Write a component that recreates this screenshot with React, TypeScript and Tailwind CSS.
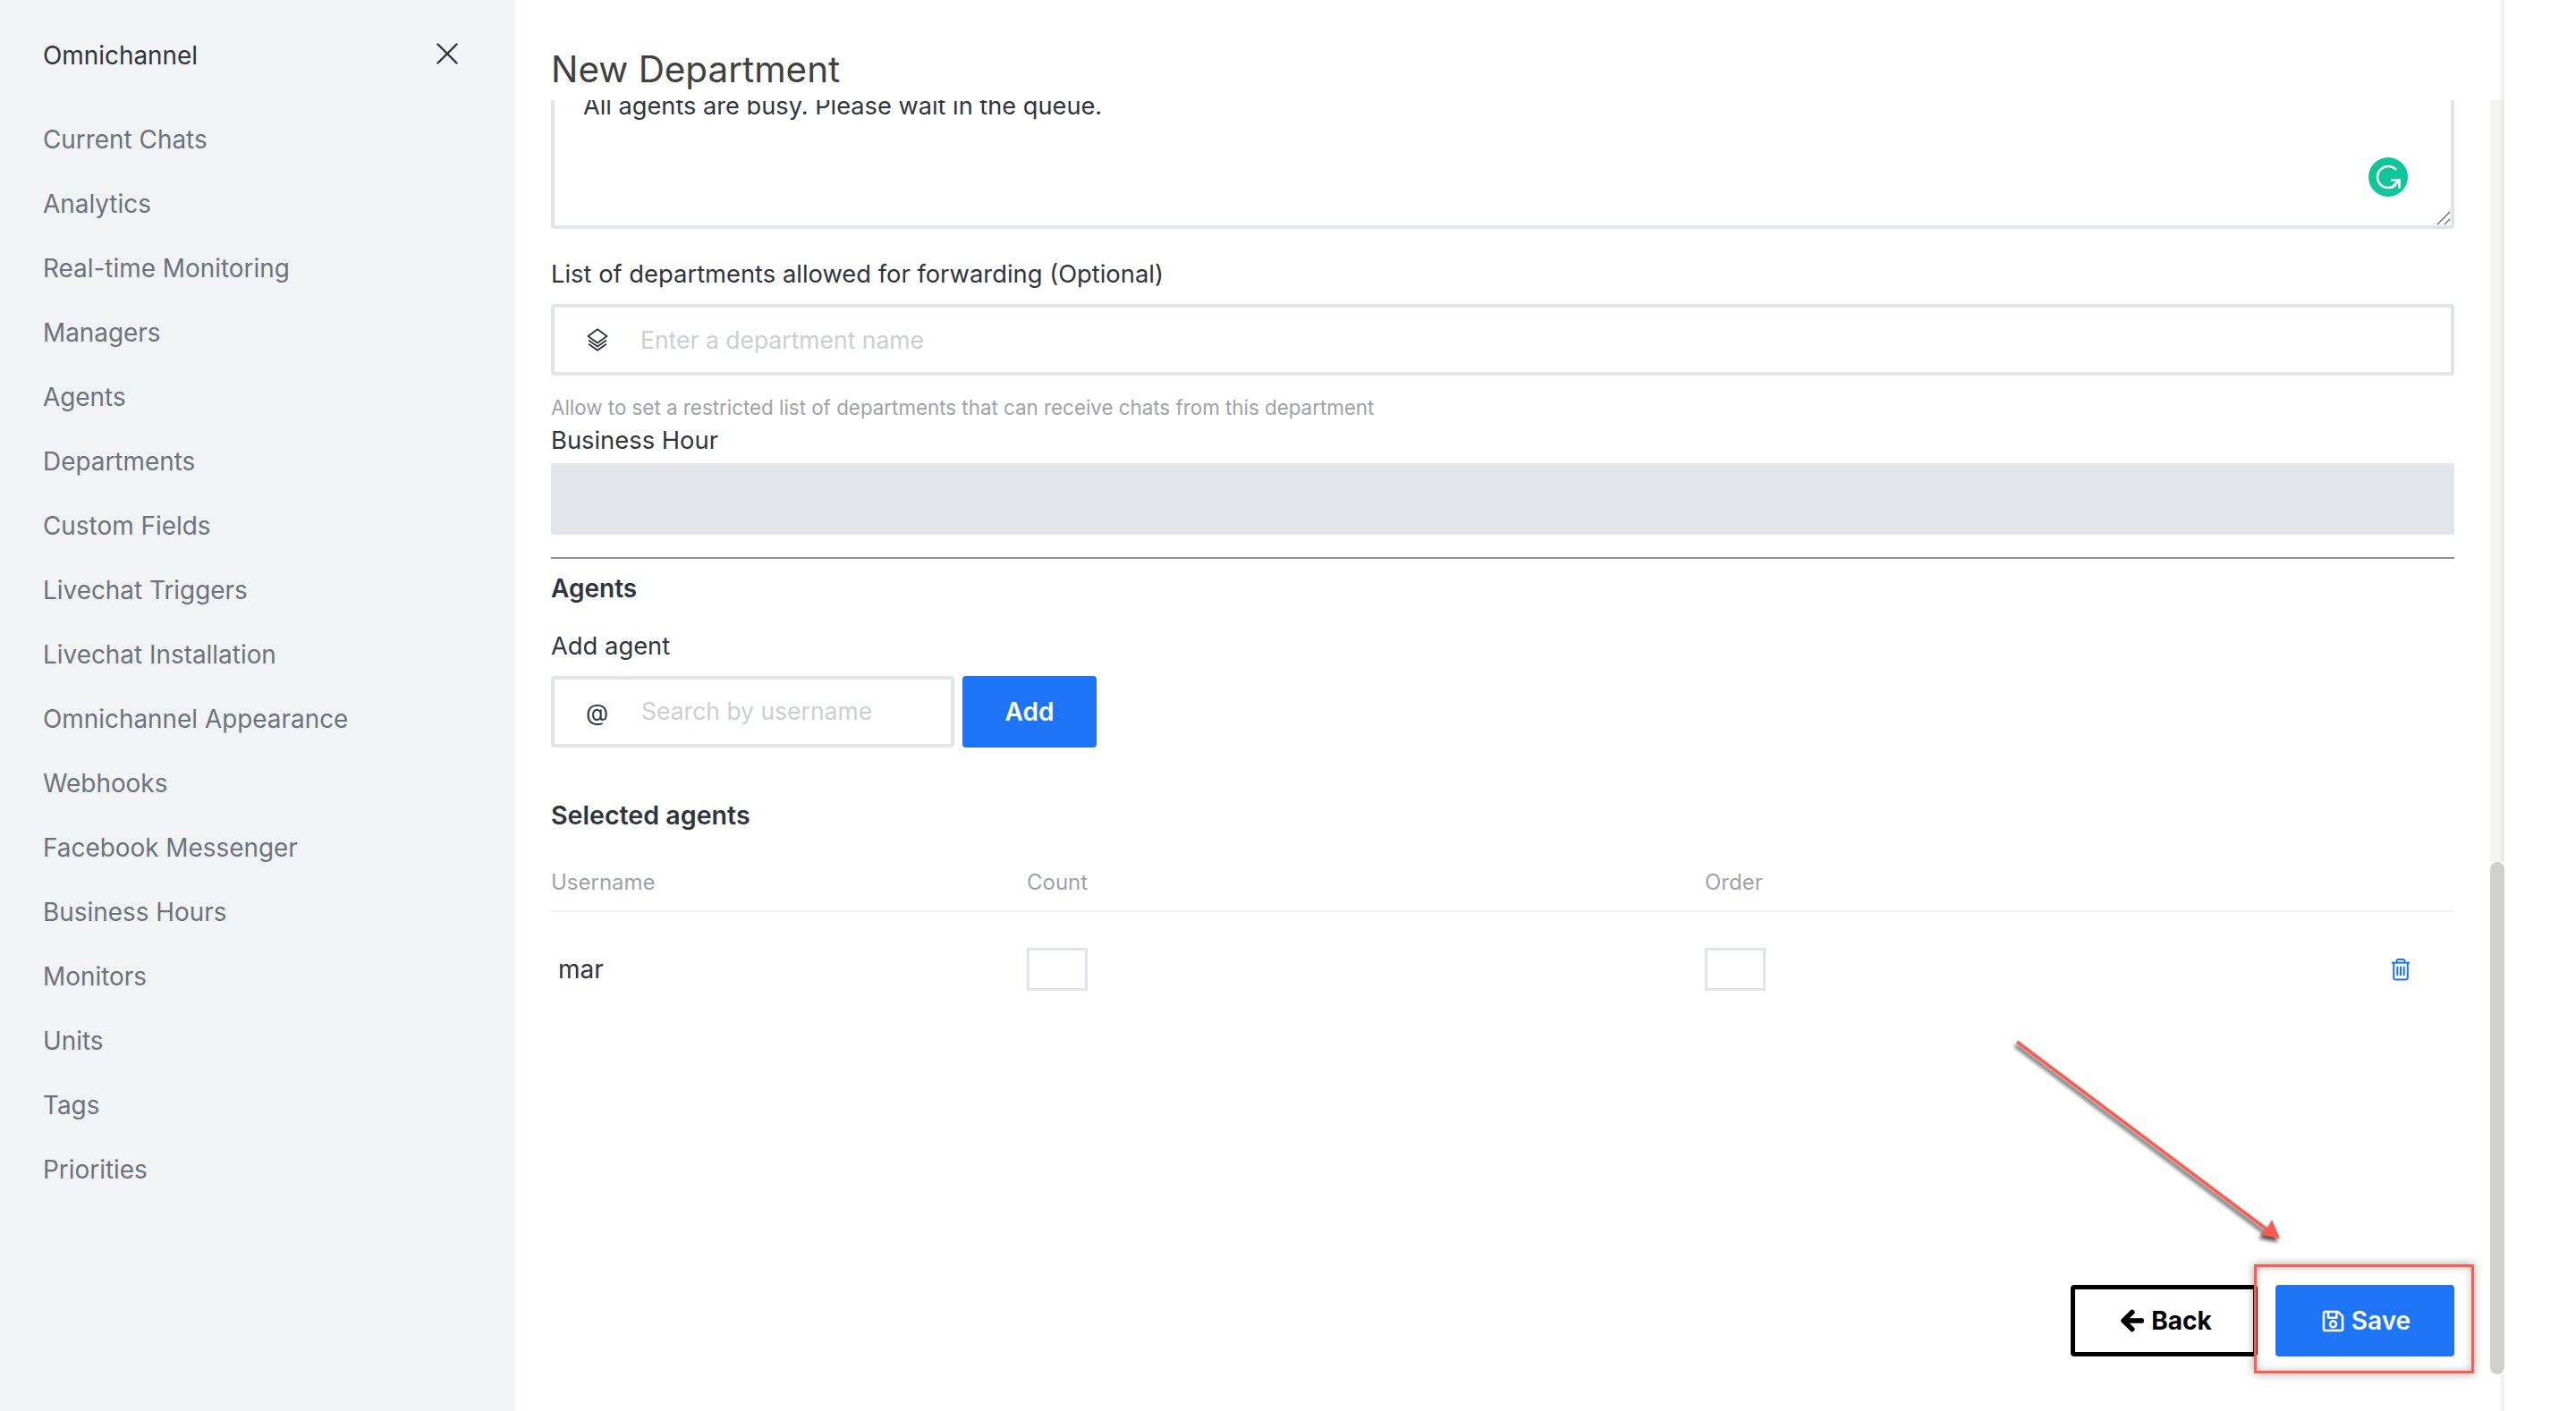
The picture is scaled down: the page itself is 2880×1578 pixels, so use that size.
import { X } from 'lucide-react';
import { FaArrowLeft, FaRegSave } from 'react-icons/fa';

const menuItems = [
  'Current Chats',
  'Analytics',
  'Real-time Monitoring',
  'Managers',
  'Agents',
  'Departments',
  'Custom Fields',
  'Livechat Triggers',
  'Livechat Installation',
  'Omnichannel Appearance',
  'Webhooks',
  'Facebook Messenger',
  'Business Hours',
  'Monitors',
  'Units',
  'Tags',
  'Priorities',
];

function LayersIcon() {
  return (
    <svg viewBox="0 0 24 24" className="h-[28px] w-[28px]" fill="none" stroke="#2f343d" strokeWidth="1.6" strokeLinejoin="round">
      <path d="M12 2 21 8.500 12 15 3 8.500Z" />
      <path d="M3.500 12.500 12 18.500 20.500 12.500" />
      <path d="M3.500 16 12 22 20.500 16" />
    </svg>
  );
}

function TrashIcon() {
  return (
    <svg viewBox="0 0 24 28" className="h-[26px] w-[22px]" fill="none" stroke="#1d74f5" strokeWidth="2.2">
      <path d="M1 6h22" />
      <path d="M7 6V4.500Q7 2 9.500 2h5Q17 2 17 4.500V6" />
      <path d="M3.500 6v18q0 2.500 2.500 2.500h12q2.500 0 2.500-2.500V6" />
      <path d="M8 10.500v11M12 10.500v11M16 10.500v11" />
    </svg>
  );
}

function GrammarlyBadge() {
  return (
    <svg viewBox="0 0 44 44" className="h-[44px] w-[44px]">
      <circle cx="22" cy="22" r="22" fill="#11c59a" />
      <path d="M31 14A12 12 0 1 0 30.500 30.500" fill="none" stroke="white" strokeWidth="2.600" />
      <path d="M25 25.500h9.500v9" fill="none" stroke="white" strokeWidth="2.600" />
      <path d="M34 26 27 33" stroke="white" strokeWidth="2.600" />
    </svg>
  );
}

export default function App() {
  return (
    <div className="relative flex h-[1578px] w-[2880px] overflow-hidden bg-white font-['Inter',sans-serif] text-[27.350px] text-[#2f343d]">
      <aside className="w-[576px] shrink-0 bg-[#f2f3f5] pl-[48px] pr-[55px] text-[27.900px]">
        <div className="flex h-[121px] items-center justify-between">
          <span className="mt-[2px] leading-[40px] text-[#2f343d]">Omnichannel</span>
          <X className="mb-[2px] h-[42px] w-[42px] text-[#2f343d]" strokeWidth={1.4} />
        </div>
        <nav className="flex flex-col">
          {menuItems.map((item) => (
            <a key={item} className="flex h-[72px] items-center text-[#6c737c]">
              {item}
            </a>
          ))}
        </nav>
      </aside>

      <main className="flex w-[2208px] shrink-0 flex-col">
        <header className="h-[112px] shrink-0 pl-[40px] pt-[50px]">
          <h1 className="text-[40.400px] leading-[56px] text-[#414141]">New Department</h1>
        </header>

        <div className="min-h-0 flex-1 overflow-hidden pl-[40px] pr-[40px]">
          <div className="relative -mt-[36px] h-[180px] rounded-[4px] border-4 border-[#e1e4e8] pl-[32px] pt-[19px] text-[27.200px] leading-[40px]">
            All agents are busy. Please wait in the queue.
            <div className="absolute right-[48px] top-[96px]">
              <GrammarlyBadge />
            </div>
            <svg viewBox="0 0 16 16" className="absolute bottom-0 right-0 h-[16px] w-[16px]" stroke="#666" strokeWidth="1.300">
              <path d="M1 15 15 1M9 15l6-6" />
            </svg>
          </div>

          <label className="mt-[32px] block leading-[38px]">List of departments allowed for forwarding (Optional)</label>
          <div className="mt-[14px] flex h-[80px] items-center rounded-[4px] border-4 border-[#e1e4e8] pl-[34px]">
            <LayersIcon />
            <span className="ml-[34px] pt-[2px] text-[26.500px] text-[#cbced1]">Enter a department name</span>
          </div>
          <p className="mt-[22px] text-[22.350px] leading-[28px] text-[#9ea2a8]">
            Allow to set a restricted list of departments that can receive chats from this department
          </p>
          <label className="mt-[5px] block leading-[36px]">Business Hour</label>
          <div className="mt-[7px] h-[80px] rounded-[2px] bg-[#e1e4e8]" />

          <div className="mt-[25px] border-t-2 border-[#8f9296] pt-[15px]">
            <h2 className="text-[28px] font-semibold leading-[36px]">Agents</h2>
            <label className="mt-[29px] block leading-[36px]">Add agent</label>
            <div className="mt-[15px] flex gap-[9px]">
              <div className="flex h-[80px] w-[451px] items-center rounded-[4px] border-4 border-[#e1e4e8] pl-[35px]">
                <span className="w-[62px] shrink-0 text-[26px]">@</span>
                <span className="text-[26.500px] text-[#cbced1]">Search by username</span>
              </div>
              <button className="h-[80px] w-[150px] rounded-[4px] bg-[#1d74f5] text-[28px] font-semibold text-white">Add</button>
            </div>

            <h2 className="mt-[58px] text-[28.600px] font-semibold leading-[36px]">Selected agents</h2>
            <div className="mt-[44px] flex h-[46px] items-start border-b-2 border-[#f2f3f5] text-[24px] leading-[26px] text-[#9ea2a8]">
              <span className="w-[532px]">Username</span>
              <span className="w-[758px]">Count</span>
              <span>Order</span>
            </div>
            <div className="flex h-[128px] items-center">
              <span className="w-[532px] pl-[8px] text-[28px]">mar</span>
              <div className="w-[758px]">
                <div className="h-[48px] w-[68px] border-[3px] border-[#e1e4e8]" />
              </div>
              <div className="h-[48px] w-[68px] border-[3px] border-[#e1e4e8]" />
              <div className="ml-[699px]">
                <TrashIcon />
              </div>
            </div>
          </div>

          <div className="mt-[289px] flex justify-end text-[28px]">
            <button className="flex h-[80px] w-[209px] items-center justify-center gap-[7px] rounded-[4px] border-[5px] border-black font-bold text-black">
              <FaArrowLeft className="ml-[4px] h-[28px] w-[28px]" stroke="currentColor" strokeWidth={24} />
              Back
            </button>
            <button className="ml-[20px] flex h-[80px] w-[200px] items-center justify-center gap-[7px] rounded-[4px] bg-[#1d74f5] pl-[2px] font-semibold text-white">
              <FaRegSave className="h-[27px] w-[27px]" />
              Save
            </button>
          </div>
        </div>
      </main>

      <div className="flex w-[16px] shrink-0 flex-col">
        <div className="h-[112px] w-full border-r-4 border-[#f0f0f0]" />
        <div className="h-[852px] w-full border-r-4 border-[#e9e9e8] bg-[#f3f3f2]" />
        <div className="h-[573px] w-full rounded-b-[8px] rounded-t-[8px] bg-[#cfcfcd]" />
        <div className="flex-1 border-r-4 border-[#f0f0f0]" />
      </div>

      {/* red annotation over the save button */}
      <div className="absolute left-[2520px] top-[1414px] h-[122px] w-[246px] border-[3px] border-[#ff5a52] shadow-[0_0_10px_rgba(0,0,0,0.35),inset_0_0_10px_rgba(0,0,0,0.25)]" />
      <svg className="absolute left-[2240px] top-[1150px] h-[260px] w-[330px] drop-shadow-[-2px_4px_2px_rgba(0,0,0,0.7)]" viewBox="0 0 330 260" fill="none">
        <path d="M15 15 296 226" stroke="#ff5a52" strokeWidth="3.500" />
        <path d="M309 235 300 214 296 222 287 231Z" fill="#ff5a52" />
      </svg>
    </div>
  );
}
